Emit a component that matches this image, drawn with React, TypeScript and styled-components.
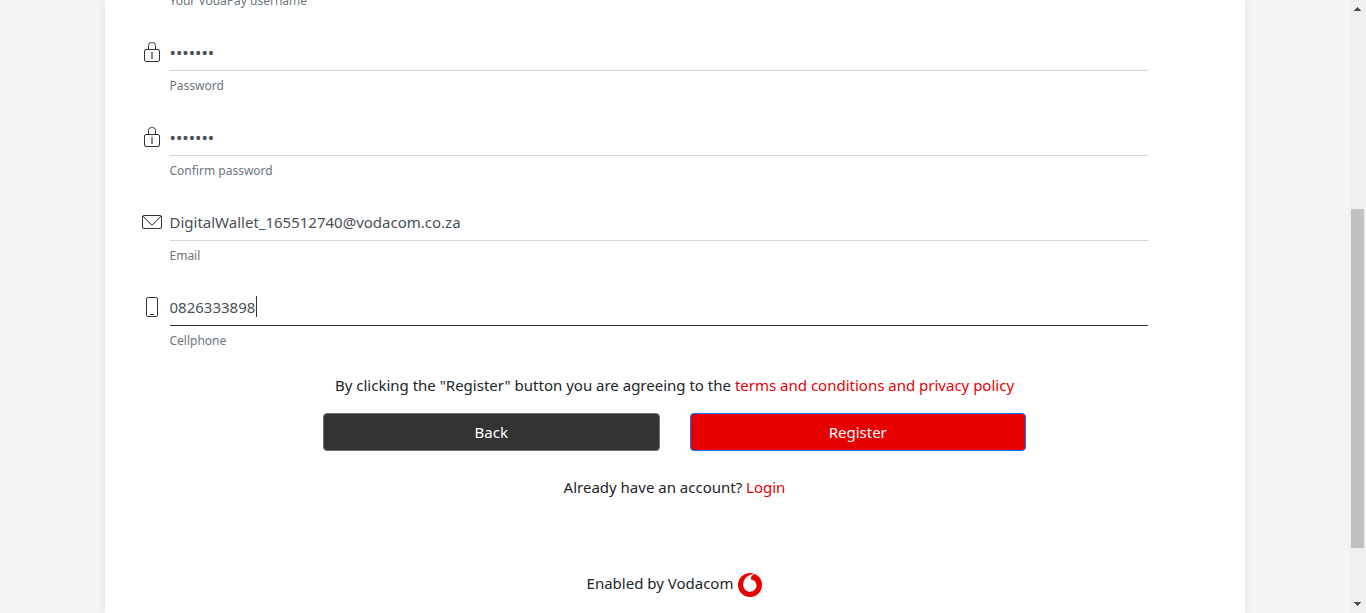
import React from "react";
import styled, { createGlobalStyle } from "styled-components";

const GlobalStyle = createGlobalStyle`
  *, *::before, *::after { box-sizing: border-box; }
  html, body { margin: 0; overflow: hidden; }
  body {
    background: #f5f5f5;
    color: #212529;
    font-family: "Segoe UI", "Noto Sans", "Open Sans", sans-serif;
    font-size: 15px;
    line-height: 24px;
  }
`;

const Window = styled.div`
  display: flex;
  height: 100vh;
  overflow: hidden;
`;

const Content = styled.div`
  flex: 1;
  min-width: 0;
  display: flex;
  justify-content: center;
`;

const Card = styled.main`
  flex: 0 1 1140px;
  padding: 0 35px;
  background: #fff;
  box-shadow: 0 0 8px rgba(0, 0, 0, 0.1);
`;

const Form = styled.form`
  display: flex;
  flex-direction: column;
`;

const Fields = styled.div`
  display: flex;
  flex-direction: column;
  gap: 23px;
  margin-top: -14px;
  padding-right: 62px;
`;

const Field = styled.div`
  display: grid;
  grid-template-columns: 24px 1fr;
  column-gap: 6px;
`;

const IconCell = styled.span`
  display: flex;
  align-items: center;
  justify-content: center;
  color: #333;
`;

const InputWrap = styled.div`
  position: relative;
`;

const Input = styled.input<{ $active?: boolean }>`
  display: block;
  width: 100%;
  height: 38px;
  padding: 0;
  border: 0;
  border-bottom: 1px solid ${(p) => (p.$active ? "#333" : "#d5d5d5")};
  border-radius: 0;
  outline: none;
  background: transparent;
  color: #495057;
  font: inherit;

  &[type="password"] {
    padding-top: 2px;
    font-size: 17px;
  }
`;

const Caret = styled.span`
  position: absolute;
  top: 8px;
  left: 86px;
  width: 1px;
  height: 21px;
  background: #333;
`;

const Hint = styled.label`
  grid-column: 2;
  padding-top: 5px;
  color: #6c757d;
  font-size: 12px;
  line-height: 19px;
`;

const Centered = styled.p<{ $top: number }>`
  margin: ${(p) => p.$top}px 0 0;
  text-align: center;
`;

const TextLink = styled.a`
  color: #e60000;
  text-decoration: none;
`;

const Actions = styled.div`
  display: grid;
  grid-template-columns: 1fr 1fr;
  gap: 30px;
  width: 100%;
  max-width: 703px;
  margin: 16px auto 0;
`;

const Button = styled.button<{ $primary?: boolean }>`
  height: 38px;
  padding: 0 12px;
  border: 1px solid ${(p) => (p.$primary ? "#007bff" : "#6c757d")};
  border-radius: 4px;
  background: ${(p) => (p.$primary ? "#e60000" : "#333")};
  color: #fff;
  font: inherit;
  cursor: pointer;
`;

const Footer = styled.footer`
  display: flex;
  align-items: flex-start;
  justify-content: center;
  gap: 5px;
  margin-top: 72px;
`;

const Logo = styled.svg`
  width: 24px;
  height: 24px;
  margin-top: 2px;
`;

const ScrollTrack = styled.div`
  flex: 0 0 17px;
  display: flex;
  flex-direction: column;
  align-items: center;
  justify-content: space-between;
  padding: 7px 0;
  background: #f0f0f0;
`;

const ScrollRange = styled.div`
  flex: 1;
  display: grid;
  grid-template-rows: 198fr 339fr 54fr;
  width: 13px;
`;

const ScrollThumb = styled.div`
  grid-row: 2;
  background: #c1c1c1;
`;

const LockIcon = () => (
  <svg width="16" height="22" viewBox="0 0 16 22" fill="none" stroke="currentColor">
    <rect x="0.5" y="8.5" width="15" height="12" rx="1.5" />
    <path d="M4.5 8.500V4.500a3 3 0 0 1 3-3h1a3 3 0 0 1 3 3v4" />
    <path d="M8 11v7" strokeWidth="2" opacity="0.600" />
  </svg>
);

const MailIcon = () => (
  <svg width="20" height="14" viewBox="0 0 20 14" fill="none" stroke="currentColor">
    <rect x="0.5" y="0.5" width="19" height="13" rx="1.500" />
    <path d="M1 1l7.600 8.200a2 2 0 0 0 2.800 0L19 1" />
  </svg>
);

const PhoneIcon = () => (
  <svg width="12" height="20" viewBox="0 0 12 20" fill="none" stroke="currentColor">
    <rect x="0.5" y="0.5" width="11" height="19" rx="1.500" />
    <path d="M4 17.500h4" />
  </svg>
);

const VodacomLogo = () => (
  <Logo viewBox="0 0 24 24" role="img" aria-label="Vodacom">
    <circle cx="12" cy="12" r="12" fill="#e60000" />
    <path
      fill="#fff"
      d="M12.100 18.700c-3.700 0-6.900-2.900-6.900-7.300 0-3 1.600-5.900 3.700-7.600C11.100 2.100 13.900 1 16.400 1c.2 0 .3 0 .4.050-2.200.5-4 2.500-4 4.900v.3c3.900.9 5.700 3.200 5.700 6.300 0 3.200-2.600 6.150-6.400 6.150z"
    />
  </Logo>
);

const ScrollArrow = ({ down = false }: { down?: boolean }) => (
  <svg width="7" height="4" viewBox="0 0 7 4" fill="#505050" shapeRendering="crispEdges">
    <path d={down ? "M0 0h7v1h-1v1h-1v1h-1v1h-1v-1h-1v-1h-1v-1h-1z" : "M0 4h7v-1h-1v-1h-1v-1h-1v-1h-1v1h-1v1h-1v1h-1z"} />
  </svg>
);

type FieldData = {
  id: string;
  label: string;
  type: string;
  value: string;
  icon: React.ReactNode;
  active?: boolean;
};

const fields: FieldData[] = [
  { id: "password", label: "Password", type: "password", value: "secret1", icon: <LockIcon /> },
  { id: "confirm", label: "Confirm password", type: "password", value: "secret1", icon: <LockIcon /> },
  { id: "email", label: "Email", type: "email", value: "DigitalWallet_165512740@vodacom.co.za", icon: <MailIcon /> },
  { id: "cellphone", label: "Cellphone", type: "tel", value: "0826333898", icon: <PhoneIcon />, active: true },
];

export default function App() {
  return (
    <>
      <GlobalStyle />
      <Window>
        <Content>
          <Card>
            <Form onSubmit={(e) => e.preventDefault()}>
              <Fields>
                <Field>
                  <Hint as="span">Your VodaPay username</Hint>
                </Field>
                {fields.map((f) => (
                  <Field key={f.id}>
                    <IconCell>{f.icon}</IconCell>
                    <InputWrap>
                      <Input id={f.id} type={f.type} defaultValue={f.value} $active={f.active} />
                      {f.active && <Caret />}
                    </InputWrap>
                    <Hint htmlFor={f.id}>{f.label}</Hint>
                  </Field>
                ))}
              </Fields>
              <Centered $top={23}>
                By clicking the "Register" button you are agreeing to the{" "}
                <TextLink href="#terms">terms and conditions and privacy policy</TextLink>
              </Centered>
              <Actions>
                <Button type="button">Back</Button>
                <Button type="submit" $primary>
                  Register
                </Button>
              </Actions>
              <Centered $top={24}>
                Already have an account? <TextLink href="#login">Login</TextLink>
              </Centered>
            </Form>
            <Footer>
              <span>Enabled by Vodacom</span>
              <VodacomLogo />
            </Footer>
          </Card>
        </Content>
        <ScrollTrack aria-hidden="true">
          <ScrollArrow />
          <ScrollRange>
            <ScrollThumb />
          </ScrollRange>
          <ScrollArrow down />
        </ScrollTrack>
      </Window>
    </>
  );
}
